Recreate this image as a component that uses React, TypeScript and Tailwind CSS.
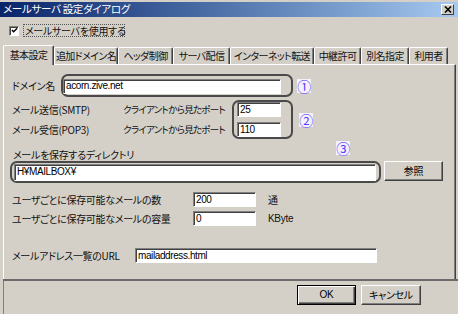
import React from "react";

/* ── classic Win2000 bits ── */
const font = "font-['Noto_Sans_CJK_JP','Liberation_Sans',sans-serif] [font-feature-settings:'palt']";

function Field({ value, className }: { value: string; className: string }) {
  return (
    <div
      className={`bg-white border border-t-[#808080] border-l-[#808080] border-b-white border-r-white shadow-[inset_1px_1px_0_#404040] h-[15px] flex items-center pl-[2px] text-[10px] text-black font-['Liberation_Sans',sans-serif] tracking-[-0.4px] ${className}`}
    >
      {value}
    </div>
  );
}

function Button({ label, def, className }: { label: string; def?: boolean; className: string }) {
  return (
    <div
      className={`flex items-center justify-center text-[10px] text-black ${
        def
          ? "border border-black shadow-[inset_1px_1px_0_#ffffff,inset_-1px_-1px_0_#404040,inset_-2px_-2px_0_#808080]"
          : "border border-t-white border-l-white border-b-[#404040] border-r-[#404040] shadow-[inset_-1px_-1px_0_#808080]"
      } ${className}`}
    >
      {label}
    </div>
  );
}

function Circled({ n, className }: { n: string; className?: string }) {
  return (
    <span className={`flex items-center justify-center w-[14px] h-[14px] bg-[#f3f1fa] text-[#5b3cff] text-[14px] leading-none ${className ?? ""}`}>
      {n}
    </span>
  );
}

const tabs = [
  { label: "追加ドメイン名", w: "w-[64px]" },
  { label: "ヘッダ制御", w: "w-[55px]" },
  { label: "サーバ配信", w: "w-[57px]" },
  { label: "インターネット転送", w: "w-[84px]" },
  { label: "中継許可", w: "w-[47px]" },
  { label: "別名指定", w: "w-[48px]" },
  { label: "利用者", w: "w-[39px]" },
];

export default function App() {
  return (
    <div className={`w-[458px] h-[314px] bg-[#d4d0c8] overflow-hidden text-[#111] text-[10px] leading-none tracking-[-0.3px] whitespace-nowrap ${font}`}>
      {/* title bar */}
      <div className="mt-[2px] h-[15px] flex items-center justify-between bg-gradient-to-r from-[#0a246a] to-[#a6caf0] pl-[3px] pr-[4px]">
        <span className="text-white text-[10.5px]">メールサーバ 設定ダイアログ</span>
        <div className="w-[13px] h-[11px] bg-[#d4d0c8] border border-t-white border-l-white border-b-[#404040] border-r-[#404040] flex items-center justify-center">
          <svg viewBox="0 0 8 7" className="w-[8px] h-[7px]">
            <path d="M1 0.5L7 6.5M7 0.5L1 6.5" stroke="black" strokeWidth="1.6" />
          </svg>
        </div>
      </div>

      {/* checkbox */}
      <div className="mt-[7px] h-[13px] flex items-center pl-[9px]">
        <div className="w-[10px] h-[10px] bg-white border border-t-[#808080] border-l-[#808080] border-b-white border-r-white shadow-[inset_1px_1px_0_#404040] flex items-center justify-center">
          <svg viewBox="0 0 8 8" className="w-[7px] h-[7px]">
            <path d="M1 3.5L3 5.5L7 1.5" stroke="black" strokeWidth="1.6" fill="none" />
          </svg>
        </div>
        <div className="ml-[4px] h-[13px] w-[102px] px-[1px] border border-dotted border-[#555] flex items-center">メールサーバを使用する</div>
      </div>

      {/* tabs */}
      <div className="mt-[8px] h-[19px] flex items-end pl-[3px] relative z-10 tracking-[-0.6px]">
        <div className="w-[51px] h-[20px] -mb-px bg-[#d4d0c8] border-t border-l border-white border-r border-r-[#404040] rounded-t-[2px] shadow-[inset_-1px_0_0_#808080] flex items-center justify-center pb-[2px]">
          基本設定
        </div>
        {tabs.map((t) => (
          <div
            key={t.label}
            className={`${t.w} h-[17px] border-t border-l border-white border-r border-r-[#404040] rounded-t-[2px] shadow-[inset_-1px_0_0_#808080] flex items-center justify-center`}
          >
            {t.label}
          </div>
        ))}
      </div>

      {/* panel */}
      <div className="ml-[3px] w-[453px] h-[215px] border-t border-l border-white border-r border-r-[#404040] shadow-[inset_-1px_0_0_#808080]">
        {/* domain */}
        <div className="mt-[9px] flex items-center">
          <span className="ml-[8px] w-[49px]">ドメイン名</span>
          <div className="w-[232px] h-[23px] border-2 border-[#4a4a4a] rounded-[7px] flex items-center pt-[1px]">
            <Field value="acorn.zive.net" className="w-[218px]" />
          </div>
          <Circled n="①" className="ml-[4px] mt-[1px]" />
        </div>

        {/* smtp / pop3 */}
        <div className="mt-[3px] flex items-center">
          <div className="ml-[8px] flex flex-col gap-[5px] pt-[1px]">
            <div className="h-[15px] flex items-center">
              <span className="w-[111px]">メール送信(SMTP)</span>
              <span className="w-[109px] text-[9.5px] tracking-[-0.7px]">クライアントから見たポート</span>
            </div>
            <div className="h-[15px] flex items-center">
              <span className="w-[111px]">メール受信(POP3)</span>
              <span className="w-[109px] text-[9.5px] tracking-[-0.7px]">クライアントから見たポート</span>
            </div>
          </div>
          <div className="w-[61px] h-[39px] border-2 border-[#4a4a4a] rounded-[7px] flex flex-col gap-[5px] pl-[3px]">
            <Field value="25" className="w-[44px]" />
            <Field value="110" className="w-[44px]" />
          </div>
          <Circled n="②" className="ml-[6px] mt-[1px]" />
        </div>

        {/* directory */}
        <div className="mt-[6px] h-[16px] flex">
          <span className="ml-[9px] w-[323px] self-end pb-[1px]">メールを保存するディレクトリ</span>
          <Circled n="③" className="self-start mt-[-4px]" />
        </div>
        <div className="flex">
          <div className="ml-[6px] w-[371px] h-[22px] border-2 border-[#4a4a4a] rounded-[7px] flex items-center pl-[2px]">
            <Field value="H¥MAILBOX¥" className="w-[362px] h-[17px]" />
          </div>
          <Button label="参照" className="ml-[3px] w-[59px] h-[20px]" />
        </div>

        {/* limits */}
        <div className="mt-[9px] flex items-center">
          <span className="ml-[8px] w-[181px]">ユーザごとに保存可能なメールの数</span>
          <Field value="200" className="w-[63px]" />
          <span className="ml-[12px]">通</span>
        </div>
        <div className="mt-[4px] flex items-center">
          <span className="ml-[8px] w-[181px]">ユーザごとに保存可能なメールの容量</span>
          <Field value="0" className="w-[63px]" />
          <span className="ml-[12px] font-['Liberation_Sans',sans-serif]">KByte</span>
        </div>

        {/* url */}
        <div className="mt-[22px] flex items-center">
          <span className="ml-[8px] w-[123px]">メールアドレス一覧のURL</span>
          <Field value="mailaddress.html" className="w-[242px]" />
        </div>
      </div>

      {/* bottom */}
      <div className="ml-[3px] h-[2px] bg-[#6b6b6b]" />
      <div className="ml-[3px] h-[33px] border-l border-[#808080] flex items-start pt-[4px]">
        <Button label="OK" def className="ml-[293px] w-[59px] h-[20px] font-['Liberation_Sans',sans-serif]" />
        <Button label="キャンセル" className="ml-[5px] w-[60px] h-[20px]" />
      </div>
    </div>
  );
}
